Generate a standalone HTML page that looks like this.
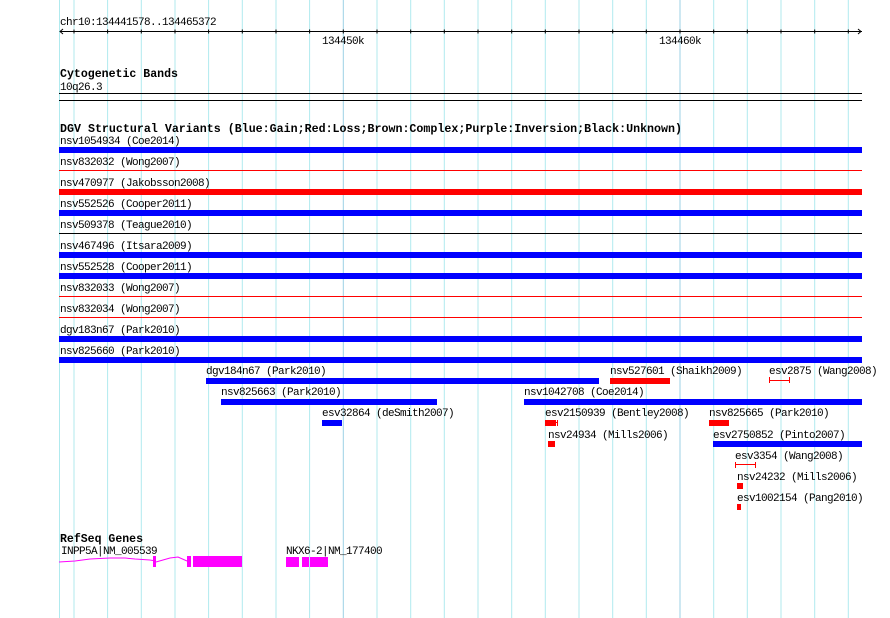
<!DOCTYPE html>
<html><head><meta charset="utf-8"><style>
html,body{margin:0;padding:0;background:#fff;}
svg{display:block;}
text{font-family:"Liberation Mono","DejaVu Sans Mono",monospace;font-size:11px;letter-spacing:-0.6px;fill:#000;}
.b{font-weight:bold;font-size:11.5px;letter-spacing:0;}
</style></head><body>
<svg width="890" height="618" viewBox="0 0 890 618" xmlns="http://www.w3.org/2000/svg">
<g stroke="#b0eaee" stroke-width="1">
<line x1="59.5" y1="0" x2="59.5" y2="618"/>
<line x1="74" y1="0" x2="74" y2="618"/>
<line x1="107.6" y1="0" x2="107.6" y2="618"/>
<line x1="141.3" y1="0" x2="141.3" y2="618"/>
<line x1="175" y1="0" x2="175" y2="618"/>
<line x1="208.6" y1="0" x2="208.6" y2="618"/>
<line x1="242.3" y1="0" x2="242.3" y2="618"/>
<line x1="276" y1="0" x2="276" y2="618"/>
<line x1="309.6" y1="0" x2="309.6" y2="618"/>
<line x1="377" y1="0" x2="377" y2="618"/>
<line x1="410.7" y1="0" x2="410.7" y2="618"/>
<line x1="444.3" y1="0" x2="444.3" y2="618"/>
<line x1="478" y1="0" x2="478" y2="618"/>
<line x1="511.7" y1="0" x2="511.7" y2="618"/>
<line x1="545.3" y1="0" x2="545.3" y2="618"/>
<line x1="579" y1="0" x2="579" y2="618"/>
<line x1="612.7" y1="0" x2="612.7" y2="618"/>
<line x1="646.3" y1="0" x2="646.3" y2="618"/>
<line x1="713.7" y1="0" x2="713.7" y2="618"/>
<line x1="747.3" y1="0" x2="747.3" y2="618"/>
<line x1="781" y1="0" x2="781" y2="618"/>
<line x1="814.7" y1="0" x2="814.7" y2="618"/>
<line x1="848.3" y1="0" x2="848.3" y2="618"/>
</g>
<g stroke="#9cd0e4" stroke-width="1">
<line x1="343.3" y1="0" x2="343.3" y2="618"/>
<line x1="680" y1="0" x2="680" y2="618"/>
</g>
<text x="60" y="25">chr10:134441578..134465372</text>
<line x1="60" y1="31.5" x2="862" y2="31.5" stroke="#000"/>
<path d="M63 29 L60 31.5 L63 34 M858 29 L861 31.5 L858 34" stroke="#000" fill="none"/>
<g stroke="#000">
<line x1="74" y1="29.5" x2="74" y2="33.5"/><line x1="107.6" y1="29.5" x2="107.6" y2="33.5"/><line x1="141.3" y1="29.5" x2="141.3" y2="33.5"/><line x1="175" y1="29.5" x2="175" y2="33.5"/><line x1="208.6" y1="29.5" x2="208.6" y2="33.5"/><line x1="242.3" y1="29.5" x2="242.3" y2="33.5"/><line x1="276" y1="29.5" x2="276" y2="33.5"/><line x1="309.6" y1="29.5" x2="309.6" y2="33.5"/><line x1="343.3" y1="29.5" x2="343.3" y2="33.5"/><line x1="377" y1="29.5" x2="377" y2="33.5"/><line x1="410.7" y1="29.5" x2="410.7" y2="33.5"/><line x1="444.3" y1="29.5" x2="444.3" y2="33.5"/><line x1="478" y1="29.5" x2="478" y2="33.5"/><line x1="511.7" y1="29.5" x2="511.7" y2="33.5"/><line x1="545.3" y1="29.5" x2="545.3" y2="33.5"/><line x1="579" y1="29.5" x2="579" y2="33.5"/><line x1="612.7" y1="29.5" x2="612.7" y2="33.5"/><line x1="646.3" y1="29.5" x2="646.3" y2="33.5"/><line x1="680" y1="29.5" x2="680" y2="33.5"/><line x1="713.7" y1="29.5" x2="713.7" y2="33.5"/><line x1="747.3" y1="29.5" x2="747.3" y2="33.5"/><line x1="781" y1="29.5" x2="781" y2="33.5"/><line x1="814.7" y1="29.5" x2="814.7" y2="33.5"/><line x1="848.3" y1="29.5" x2="848.3" y2="33.5"/>
</g>
<text x="322" y="44">134450k</text>
<text x="659" y="44">134460k</text>
<text class="b" x="60" y="77" textLength="118" lengthAdjust="spacingAndGlyphs">Cytogenetic Bands</text>
<text x="60" y="90">10q26.3</text>
<line x1="59" y1="93.5" x2="862" y2="93.5" stroke="#000"/>
<line x1="59" y1="100.5" x2="862" y2="100.5" stroke="#000"/>
<text class="b" x="60" y="132" textLength="622" lengthAdjust="spacingAndGlyphs">DGV Structural Variants (Blue:Gain;Red:Loss;Brown:Complex;Purple:Inversion;Black:Unknown)</text>
<text x="60" y="144">nsv1054934 (Coe2014)</text>
<rect x="59" y="147" width="803" height="6" fill="#0000ff"/>
<text x="60" y="165">nsv832032 (Wong2007)</text>
<rect x="59" y="170" width="803" height="1" fill="#ff0000"/>
<text x="60" y="186">nsv470977 (Jakobsson2008)</text>
<rect x="59" y="189" width="803" height="6" fill="#ff0000"/>
<text x="60" y="207">nsv552526 (Cooper2011)</text>
<rect x="59" y="210" width="803" height="6" fill="#0000ff"/>
<text x="60" y="228">nsv509378 (Teague2010)</text>
<rect x="59" y="233" width="803" height="1" fill="#000"/>
<text x="60" y="249">nsv467496 (Itsara2009)</text>
<rect x="59" y="252" width="803" height="6" fill="#0000ff"/>
<text x="60" y="270">nsv552528 (Cooper2011)</text>
<rect x="59" y="273" width="803" height="6" fill="#0000ff"/>
<text x="60" y="291">nsv832033 (Wong2007)</text>
<rect x="59" y="296" width="803" height="1" fill="#ff0000"/>
<text x="60" y="312">nsv832034 (Wong2007)</text>
<rect x="59" y="317" width="803" height="1" fill="#ff0000"/>
<text x="60" y="333">dgv183n67 (Park2010)</text>
<rect x="59" y="336" width="803" height="6" fill="#0000ff"/>
<text x="60" y="354">nsv825660 (Park2010)</text>
<rect x="59" y="357" width="803" height="6" fill="#0000ff"/>
<text x="206" y="374">dgv184n67 (Park2010)</text>
<rect x="206" y="378" width="393" height="6" fill="#0000ff"/>
<text x="610" y="374">nsv527601 (Shaikh2009)</text>
<rect x="610" y="378" width="60" height="6" fill="#ff0000"/>
<text x="769" y="374">esv2875 (Wang2008)</text>
<path d="M769.5 377v6M789.5 377v6M769 380.5h21" stroke="#ff0000" fill="none"/>
<text x="221" y="395">nsv825663 (Park2010)</text>
<rect x="221" y="399" width="216" height="6" fill="#0000ff"/>
<text x="524" y="395">nsv1042708 (Coe2014)</text>
<rect x="524" y="399" width="338" height="6" fill="#0000ff"/>
<text x="322" y="416">esv32864 (deSmith2007)</text>
<rect x="322" y="420" width="20" height="6" fill="#0000ff"/>
<text x="545" y="416">esv2150939 (Bentley2008)</text>
<rect x="545" y="420" width="11" height="6" fill="#ff0000"/>
<path d="M557.5 420v6M555 422.5h3" stroke="#ff0000"/>
<text x="709" y="416">nsv825665 (Park2010)</text>
<rect x="709" y="420" width="20" height="6" fill="#ff0000"/>
<text x="548" y="438">nsv24934 (Mills2006)</text>
<rect x="548" y="441" width="7" height="6" fill="#ff0000"/>
<text x="713" y="438">esv2750852 (Pinto2007)</text>
<rect x="713" y="441" width="149" height="6" fill="#0000ff"/>
<text x="735" y="459">esv3354 (Wang2008)</text>
<path d="M735.5 462v6M755.5 462v6M735 464.5h21" stroke="#ff0000" fill="none"/>
<text x="737" y="480">nsv24232 (Mills2006)</text>
<rect x="737" y="483" width="6" height="6" fill="#ff0000"/>
<text x="737" y="501">esv1002154 (Pang2010)</text>
<rect x="737" y="504" width="4" height="6" fill="#ff0000"/>
<text class="b" x="60" y="542" textLength="83" lengthAdjust="spacingAndGlyphs">RefSeq Genes</text>
<text x="61" y="554">INPP5A|NM_005539</text>
<polyline points="59,562 75,561 90,559 110,558 125,558 135,559 150,560 156,561" fill="none" stroke="#ff00ff"/>
<polyline points="156,562 170,558 178,557 187,561" fill="none" stroke="#ff00ff"/>
<rect x="153" y="556" width="3" height="11" fill="#ff00ff"/>
<rect x="187" y="556" width="4" height="11" fill="#ff00ff"/>
<rect x="193" y="556" width="49" height="11" fill="#ff00ff"/>
<text x="286" y="554">NKX6-2|NM_177400</text>
<rect x="286" y="557" width="13" height="10" fill="#ff00ff"/>
<rect x="302" y="557" width="7" height="10" fill="#ff00ff"/>
<rect x="310" y="557" width="18" height="10" fill="#ff00ff"/>
</svg>
</body></html>
